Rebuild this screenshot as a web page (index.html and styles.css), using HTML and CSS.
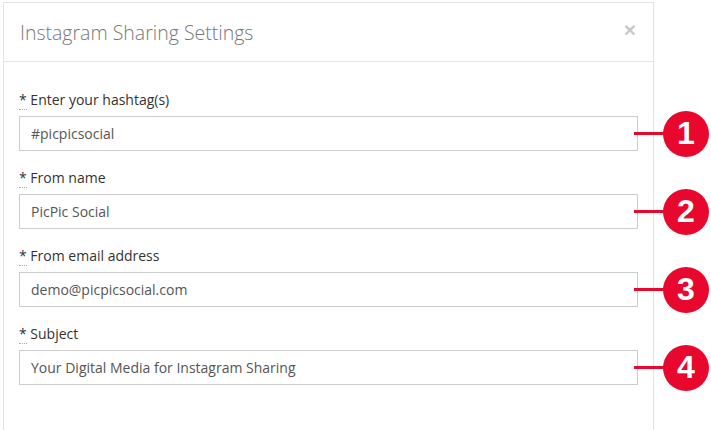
FILE: index.html
```html
<!DOCTYPE html>
<html lang="en">

<head>
    <meta charset="UTF-8">
    <meta name="viewport" content="width=device-width, initial-scale=1.0">
    <title>Instagram Sharing Settings</title>
    <link rel="stylesheet" href="styles.css">
</head>

<body>
    <div class="modal">
        <div class="modal-header">
            <h4 class="modal-title">Instagram Sharing Settings</h4>
            <button class="close-btn">&times;</button>
        </div>

        <div class="modal-body">
            <div class="form-group">
                <label><abbr title="required">*</abbr> Enter your hashtag(s)</label>
                <div class="field">
                    <input type="text" value="#picpicsocial">
                    <div class="marker"><span class="marker-line"></span><span class="marker-dot">1</span></div>
                </div>
            </div>

            <div class="form-group">
                <label><abbr title="required">*</abbr> From name</label>
                <div class="field">
                    <input type="text" value="PicPic Social">
                    <div class="marker"><span class="marker-line"></span><span class="marker-dot">2</span></div>
                </div>
            </div>

            <div class="form-group">
                <label><abbr title="required">*</abbr> From email address</label>
                <div class="field">
                    <input type="text" value="demo@picpicsocial.com">
                    <div class="marker"><span class="marker-line"></span><span class="marker-dot">3</span></div>
                </div>
            </div>

            <div class="form-group">
                <label><abbr title="required">*</abbr> Subject</label>
                <div class="field">
                    <input type="text" value="Your Digital Media for Instagram Sharing">
                    <div class="marker"><span class="marker-line"></span><span class="marker-dot">4</span></div>
                </div>
            </div>
        </div>
    </div>
</body>

</html>
```

FILE: styles.css
```css
body {
    margin: 0;
    background: #fff;
    font-family: 'Open Sans', 'DejaVu Sans', sans-serif;
    color: #333;
    overflow: hidden;
}

/* Modal box */
.modal {
    width: 649px;
    height: 440px;
    margin: 2px 0 0 3px;
    border: 1px solid #e3e3e3;
    border-bottom: none;
    background: #fff;
}

.modal-header {
    display: flex;
    align-items: center;
    justify-content: space-between;
    height: 58px;
    padding: 0 17px 0 16px;
    border-bottom: 1px solid #e5e5e5;
}

.modal-title {
    margin: 0;
    font-size: 19.5px;
    font-weight: 300;
    color: #777;
}

.close-btn {
    background: none;
    border: none;
    padding: 0;
    margin-top: -6px;
    font-family: 'Liberation Sans', Arial, sans-serif;
    font-size: 21px;
    font-weight: bold;
    line-height: 1;
    color: #c8c8c8;
    cursor: pointer;
}

.modal-body {
    padding: 28px 15px 0;
}

/* Form groups */
.form-group {
    margin-bottom: 17px;
}

.form-group label {
    display: block;
    height: 20px;
    margin-bottom: 6px;
    font-size: 14px;
    line-height: 20px;
    color: #333;
}

.form-group abbr {
    text-decoration: none;
    border-bottom: 1px dotted #aaa;
}

.field {
    position: relative;
}

.field input {
    display: block;
    box-sizing: border-box;
    width: 100%;
    height: 35px;
    padding: 0 11px;
    border: 1px solid #ccc;
    border-radius: 0;
    font-family: inherit;
    font-size: 14px;
    color: #555;
    background: #fff;
}

/* Numbered callouts */
.marker {
    position: absolute;
    left: 615px;
    top: 50%;
    display: flex;
    align-items: center;
    transform: translateY(-50%);
}

.marker-line {
    width: 32px;
    height: 3px;
    background: #e8082d;
}

.marker-dot {
    display: flex;
    align-items: center;
    justify-content: center;
    width: 46px;
    height: 46px;
    margin-left: -3px;
    border-radius: 50%;
    background: #e8082d;
    color: #fff;
    font-family: 'Liberation Sans', Arial, sans-serif;
    font-size: 32px;
    font-weight: bold;
}
```
